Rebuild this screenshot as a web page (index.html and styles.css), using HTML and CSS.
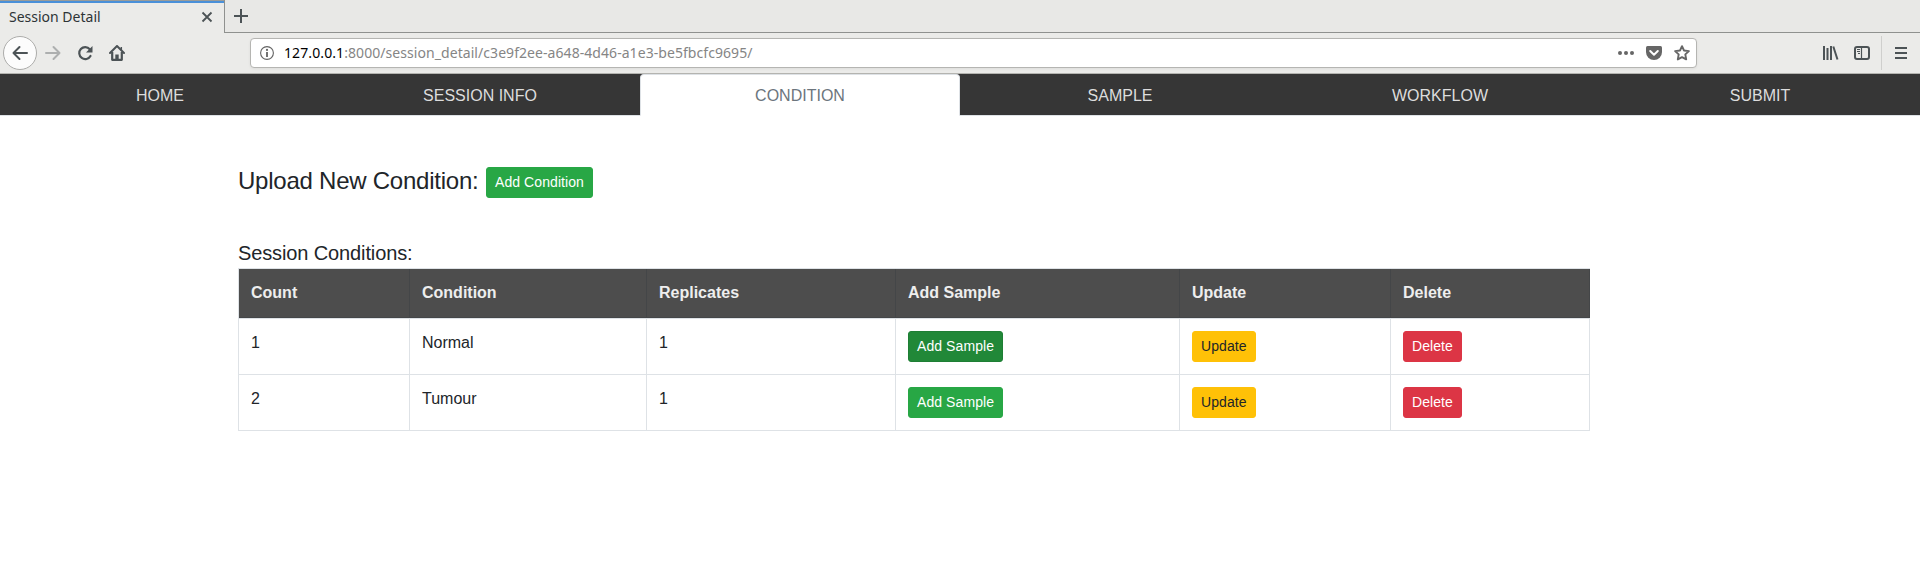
FILE: index.html
```html
<!DOCTYPE html>
<html lang="en">
<head>
<meta charset="utf-8">
<title>Session Detail</title>
<link rel="stylesheet" href="styles.css">
</head>
<body>
<header class="browser">
  <div class="tabstrip">
    <div class="tab"><span class="tab-title">Session Detail</span>
      <svg class="tab-close" width="12" height="12" viewBox="0 0 12 12"><path d="M1.500 1.500l9 9M10.500 1.500l-9 9" fill="none" stroke="#4c5356" stroke-width="1.800"/></svg>
    </div>
    <div class="tab-rest"><svg width="14" height="14" viewBox="0 0 14 14"><path d="M7 0v14M0 7h14" stroke="#4c5356" stroke-width="2"/></svg></div>
  </div>
  <div class="toolbar">
    <div class="back"><svg width="16" height="16" viewBox="0 0 16 16"><path d="M15 8H1.500M7.500 2L1.500 8l6 6" fill="none" stroke="#4c5356" stroke-width="2" stroke-linecap="round" stroke-linejoin="round"/></svg></div>
    <svg class="forward" width="16" height="16" viewBox="0 0 16 16"><path d="M1 8h13.500M8.500 2l6 6-6 6" fill="none" stroke="#adafaf" stroke-width="2" stroke-linecap="round" stroke-linejoin="round"/></svg>
    <svg class="reload" width="16" height="16" viewBox="0 0 16 16"><path d="M12.800 4.200A6 6 0 1 0 13.500 11" fill="none" stroke="#4c5356" stroke-width="2.200" stroke-linecap="round"/><path d="M15.500 1v6.500H9z" fill="#4c5356"/></svg>
    <svg class="home" width="16" height="16" viewBox="0 0 16 16"><path d="M1 8l7-7 7 7" fill="none" stroke="#4c5356" stroke-width="2" stroke-linecap="round" stroke-linejoin="round"/><path d="M3.200 7v7.800h9.600V7" fill="none" stroke="#4c5356" stroke-width="2.200" stroke-linejoin="round"/><path d="M6.300 15V9.500h3.400V15z" fill="#4c5356"/><path d="M12.300 2v3" stroke="#4c5356" stroke-width="1.500"/></svg>
    <div class="urlbar">
      <svg class="info" width="14" height="14" viewBox="0 0 14 14"><circle cx="7" cy="7" r="6.400" fill="none" stroke="#636363" stroke-width="1.100"/><path d="M7 6v5" stroke="#636363" stroke-width="1.800"/><circle cx="7" cy="3.900" r="1.100" fill="#636363"/></svg>
      <span class="host">127.0.0.1</span><span class="path">:8000/session_detail/c3e9f2ee-a648-4d46-a1e3-be5fbcfc9695/</span>
      <svg class="dots" width="16" height="16" viewBox="0 0 16 16" fill="#666"><circle cx="2" cy="8" r="2"/><circle cx="8" cy="8" r="2"/><circle cx="14" cy="8" r="2"/></svg>
      <svg class="pocket" width="16" height="16" viewBox="0 0 16 16"><path d="M1.500 1h13Q16 1 16 2.500V7a8 8 0 0 1-16 0V2.500Q0 1 1.500 1z" fill="#666"/><path d="M4.200 6L8 9.700 11.800 6" fill="none" stroke="#fff" stroke-width="2" stroke-linecap="round" stroke-linejoin="round"/></svg>
      <svg class="star" width="16" height="16" viewBox="0 0 16 16"><path d="M8 1.200l2 4.300 4.900.600-3.600 3.300.9 5L8 12.100l-4.200 2.300.9-5L1.100 6.100 6 5.500z" fill="none" stroke="#666" stroke-width="1.900" stroke-linejoin="round"/></svg>
    </div>
    <svg class="library" width="16" height="16" viewBox="0 0 16 16"><path d="M1 1v14M4.500 3v12M8 1v14M10.300 1.500l4.200 13" fill="none" stroke="#4c5356" stroke-width="2"/></svg>
    <svg class="sidebar" width="16" height="16" viewBox="0 0 16 16"><rect x="1" y="2" width="14" height="12" rx="2" fill="none" stroke="#4c5356" stroke-width="2"/><path d="M7.500 2v12" stroke="#4c5356" stroke-width="1.200"/><path d="M3 4.500h3M3 6.500h3M4 8.500h2" stroke="#4c5356"/></svg>
    <div class="menu"><svg width="12" height="12" viewBox="0 0 12 12"><path d="M0 1h12M0 6h12M0 11h12" stroke="#4c5356" stroke-width="2"/></svg></div>
  </div>
</header>
<nav class="nav">
  <a class="nav-link">HOME</a><a class="nav-link">SESSION INFO</a><a class="nav-link active">CONDITION</a><a class="nav-link">SAMPLE</a><a class="nav-link">WORKFLOW</a><a class="nav-link">SUBMIT</a>
</nav>
<main class="content">
  <div class="upload"><h4 class="upload-title">Upload New Condition:</h4><button class="btn green">Add Condition</button></div>
  <h5 class="table-title">Session Conditions:</h5>
  <table class="conditions">
    <colgroup><col class="c-count"><col class="c-condition"><col class="c-replicates"><col class="c-sample"><col class="c-update"><col class="c-delete"></colgroup>
    <thead><tr><th>Count</th><th>Condition</th><th>Replicates</th><th>Add Sample</th><th>Update</th><th>Delete</th></tr></thead>
    <tbody>
      <tr><td>1</td><td>Normal</td><td>1</td><td><button class="btn green pressed">Add Sample</button></td><td><button class="btn yellow">Update</button></td><td><button class="btn red">Delete</button></td></tr>
      <tr><td>2</td><td>Tumour</td><td>1</td><td><button class="btn green">Add Sample</button></td><td><button class="btn yellow">Update</button></td><td><button class="btn red">Delete</button></td></tr>
    </tbody>
  </table>
</main>
</body>
</html>
```
FILE: styles.css
```css
* { box-sizing: border-box; }
body { margin: 0; background: #fff; color: #212529; font: 16px/24px "Liberation Sans", Arial, sans-serif; overflow: hidden; }
svg { display: block; flex: none; }

.browser { height: 74px; background: #ebebe9; border-bottom: 1px solid #b4b4b0; font-family: "Noto Sans", sans-serif; }
.tabstrip { display: flex; height: 33px; }
.tab { width: 224px; display: flex; align-items: center; justify-content: space-between; padding: 0 11px 0 9px; border-top: 1px solid #9a9c9a; box-shadow: inset 0 2px #4a90d9; }
.tab-title { font-size: 14px; line-height: 18px; color: #2e3436; }
.tab-close { margin-top: 0; }
.tab-rest { flex: 1; background: #e8e8e6; border: solid #8f918f; border-width: 0 0 1px 1px; padding: 9px 0 0 9px; }
.toolbar { display: flex; align-items: center; height: 40px; padding: 0 0 0 3px; }
.back { width: 34px; height: 34px; border: 1px solid #acacaa; border-radius: 50%; background: #fcfcfc; display: flex; align-items: center; justify-content: center; }
.forward { margin-left: 8px; }
.reload { margin-left: 16px; }
.home { margin-left: 16px; }
.urlbar { display: flex; align-items: center; width: 1447px; height: 30px; margin-left: 125px; padding: 0 6px 0 9px; background: #fff; border: 1px solid #b5b5b2; border-radius: 4px; box-shadow: 0 1px 3px rgba(0, 0, 0, 0.06); font-size: 14px; line-height: 20px; }
.host { margin-left: 10px; color: #000; letter-spacing: 0.1px; }
.path { color: #858585; letter-spacing: 0.06px; }
.dots { margin-left: auto; }
.pocket { margin-left: 12px; }
.star { margin-left: 12px; }
.library { margin-left: 126px; }
.sidebar { margin-left: 15px; }
.menu { display: flex; align-items: center; height: 34px; margin-left: 11px; padding-left: 13px; border-left: 1px solid #cfcfcd; }

.nav { display: flex; height: 42px; background: #363636; border-bottom: 1px solid #dee2e6; }
.nav-link { flex: 1; height: 42px; padding: 9px 16px 7px; border: 1px solid transparent; border-radius: 4px 4px 0 0; color: #ddd; text-align: center; }
.active { background: #fff; color: #6c757d; border-color: #dee2e6 #dee2e6 #fff; }

.content { padding: 51px 0 0 238px; }
.upload { display: flex; height: 31px; }
.upload-title { width: 248px; margin: 0; font-size: 24px; font-weight: 500; line-height: 27px; letter-spacing: -0.24px; }
.table-title { margin: 43px 0 3px; font-size: 20px; font-weight: 500; line-height: 24px; letter-spacing: -0.12px; }
.btn { display: block; height: 31px; padding: 4px 8px; border: 1px solid; border-radius: 3px; font: 14px/21px "Liberation Sans", Arial, sans-serif; letter-spacing: 0.08px; white-space: nowrap; }
.green { color: #fff; background: #28a745; border-color: #28a745; }
.pressed { background: #218838; border-color: #1e7e34; }
.yellow { color: #212529; background: #ffc107; border-color: #ffc107; }
.red { color: #fff; background: #dc3545; border-color: #dc3545; }

.conditions { width: 1352px; table-layout: fixed; border-collapse: separate; border-spacing: 0; border: solid #dee2e6; border-width: 1px 0 0 1px; }
.c-count { width: 171px; }
.c-condition { width: 237px; }
.c-replicates { width: 249px; }
.c-sample { width: 284px; }
.c-update { width: 211px; }
.c-delete { width: 199px; }
.conditions th, .conditions td { padding: 12px; text-align: left; vertical-align: top; border: 0 solid #dee2e6; border-width: 0 1px 1px 0; }
.conditions th { background: #4d4d4d; color: #eee; border-color: #444648; }
.conditions tbody tr:first-child td { border-top-width: 1px; }
```
